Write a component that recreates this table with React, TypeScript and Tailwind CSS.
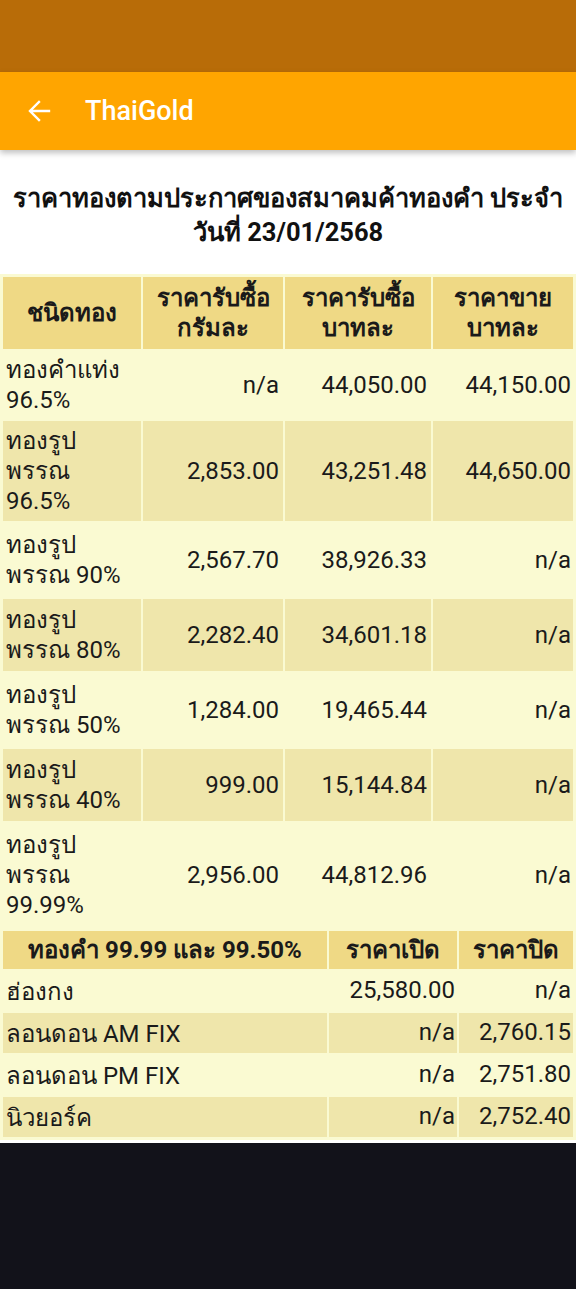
import React from "react";

const goldRows = [
    { name: ["ทองคำแท่ง", "96.5%"], gram: "n/a", buy: "44,050.00", sell: "44,150.00", h: "h-[68px]" },
    { name: ["ทองรูป", "พรรณ", "96.5%"], gram: "2,853.00", buy: "43,251.48", sell: "44,650.00", h: "h-[100px]" },
    { name: ["ทองรูป", "พรรณ 90%"], gram: "2,567.70", buy: "38,926.33", sell: "n/a", h: "h-[74px]" },
    { name: ["ทองรูป", "พรรณ 80%"], gram: "2,282.40", buy: "34,601.18", sell: "n/a", h: "h-[72px]" },
    { name: ["ทองรูป", "พรรณ 50%"], gram: "1,284.00", buy: "19,465.44", sell: "n/a", h: "h-[74px]" },
    { name: ["ทองรูป", "พรรณ 40%"], gram: "999.00", buy: "15,144.84", sell: "n/a", h: "h-[72px]" },
    { name: ["ทองรูป", "พรรณ", "99.99%"], gram: "2,956.00", buy: "44,812.96", sell: "n/a", h: "h-[104px]" },
];

const worldRows = [
    { name: "ฮ่องกง", open: "25,580.00", close: "n/a" },
    { name: "ลอนดอน AM FIX", open: "n/a", close: "2,760.15" },
    { name: "ลอนดอน PM FIX", open: "n/a", close: "2,751.80" },
    { name: "นิวยอร์ค", open: "n/a", close: "2,752.40" },
];

export default function App() {
    return (
        <div className="min-h-[1289px] w-[576px] flex flex-col bg-[#12121a] text-[#1a1a1a]" style={{ fontFamily: "Roboto, 'Noto Sans', sans-serif" }}>
            {/* status bar + app bar */}
            <div className="h-[72px] bg-[#b86c08]" />
            <div className="h-[78px] bg-[#ffa500] flex items-center shadow-[0_3px_6px_rgba(0,0,0,0.25)] relative z-10">
                <svg className="ml-[27px] w-[24px] h-[24px]" viewBox="0 0 24 24" fill="none" stroke="white" strokeWidth="2.4" strokeLinecap="square">
                    <path d="M22 12H3.5M12 3l-9 9 9 9" />
                </svg>
                <span className="ml-[34px] text-white text-[27px] font-medium">ThaiGold</span>
            </div>

            <div className="bg-white">
                <h1 className="pt-[31px] pb-[25px] px-1 text-center text-[25.5px] leading-[34px] font-bold text-[#111]">
                    ราคาทองตามประกาศของสมาคมค้าทองคำ ประจำ<br />วันที่ 23/01/2568
                </h1>

                <div className="bg-[#fafad2] p-px">
                    <table className="w-full border-separate border-spacing-[2px] text-[24px] leading-[30px]">
                        <colgroup>
                            <col className="w-[138px]" />
                            <col className="w-[140px]" />
                            <col className="w-[146px]" />
                            <col className="w-[140px]" />
                        </colgroup>
                        <thead>
                            <tr className="bg-[#efd985] font-bold text-center">
                                <th className="h-[72px] px-1">ชนิดทอง</th>
                                <th className="px-1">ราคารับซื้อ<br />กรัมละ</th>
                                <th className="px-1">ราคารับซื้อ<br />บาทละ</th>
                                <th className="px-1">ราคาขาย<br />บาทละ</th>
                            </tr>
                        </thead>
                        <tbody>
                            {goldRows.map((r, i) => (
                                <tr key={i} className={i % 2 === 1 ? "bg-[#efe6ab]" : ""}>
                                    <td className={`pl-[3px] text-left ${r.h}`}>
                                        {r.name.map((n, j) => (
                                            <div key={j}>{n}</div>
                                        ))}
                                    </td>
                                    <td className="pr-[4px] text-right">{r.gram}</td>
                                    <td className="pr-[4px] text-right">{r.buy}</td>
                                    <td className="pr-[2px] text-right">{r.sell}</td>
                                </tr>
                            ))}
                        </tbody>
                    </table>

                    <table className="w-full border-separate border-spacing-[2px] text-[24px] leading-[30px]">
                        <colgroup>
                            <col className="w-[324px]" />
                            <col className="w-[128px]" />
                            <col className="w-[114px]" />
                        </colgroup>
                        <thead>
                            <tr className="bg-[#efd985] font-bold text-center">
                                <th className="h-[38px]">ทองคำ 99.99 และ 99.50%</th>
                                <th>ราคาเปิด</th>
                                <th>ราคาปิด</th>
                            </tr>
                        </thead>
                        <tbody>
                            {worldRows.map((r, i) => (
                                <tr key={i} className={i % 2 === 1 ? "bg-[#efe6ab]" : ""}>
                                    <td className="pl-[3px] pt-[6px] pb-[4px] text-left">{r.name}</td>
                                    <td className="pr-[2px] text-right align-top pt-[4px]">{r.open}</td>
                                    <td className="pr-[2px] text-right align-top pt-[4px]">{r.close}</td>
                                </tr>
                            ))}
                        </tbody>
                    </table>
                </div>
                <div className="h-[3px] bg-white" />
            </div>
            <div className="flex-1" />
        </div>
    );
}
